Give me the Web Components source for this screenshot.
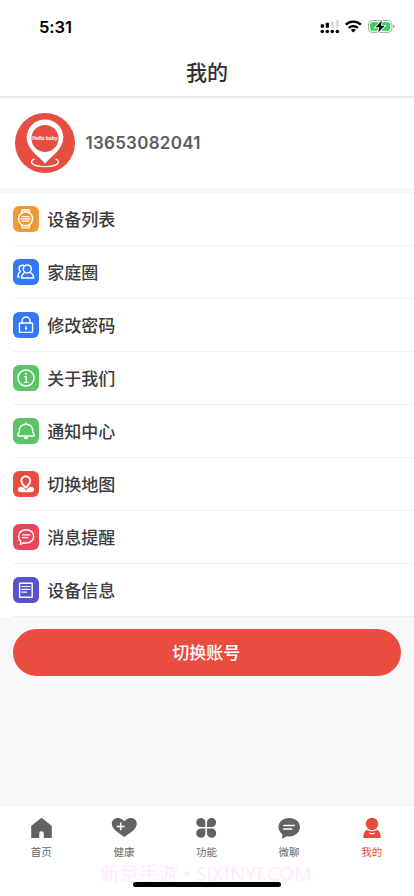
<!DOCTYPE html>
<html lang="zh-CN">
<head>
<meta charset="utf-8">
<title>我的</title>
<style>
html,body{margin:0;padding:0}
body{width:414px;height:896px;overflow:hidden;background:#f8f8fb;font-family:Inter,"Noto Sans CJK SC",sans-serif;color:#3a3a3a}
</style>
</head>
<body>
<mine-app></mine-app>
<script>
const define=(name,html)=>customElements.define(name,class extends HTMLElement{
  constructor(){
    super();
    this.attachShadow({mode:'open'});
  }
  connectedCallback(){
    if(this.shadowRoot.childNodes.length)return;
    const t=document.createElement('template');
    t.innerHTML=typeof html==='function'?html(this):html;
    this.shadowRoot.append(t.content.cloneNode(true));
  }
});

const icons={
  watch:`<path d="M8.600 7 9.200 3.700h6.800l.6 3.300M8.600 18.600l.6 3.300h6.800l.6-3.300" stroke-width="1.400"/><circle cx="12.600" cy="12.800" r="7" stroke-width="1.400"/><path d="M9.200 10.600h6.800M8 12.900h9.200M9.200 15.100h6.800" stroke-width="1.200"/>`,
  family:`<path d="M10.3 6.300C7.600 6 5.900 7.700 6.100 10c.1 1 .6 1.800 1.300 2.400-1.600.8-2.300 2.500-2.500 5.600h1.300" stroke-width="1.500"/><circle cx="14.300" cy="9.900" r="4" stroke-width="1.500"/><path d="M12.200 13.400c-2.200.9-3.600 2.800-3.700 5.600h12.100c-.1-2.800-1.500-4.700-3.900-5.600" stroke-width="1.500"/>`,
  lock:`<path d="M9 11V9a4 4 0 0 1 8 0v2" stroke-width="1.500"/><rect x="6.400" y="11" width="13.200" height="9.400" rx="1" stroke-width="1.400"/><path d="M13 14v3.600" stroke-width="1.100"/><circle cx="13" cy="16.300" r=".7" fill="#fff" stroke-width=".5"/>`,
  info:`<circle cx="13" cy="13" r="8" stroke-width="1.400"/><path d="M11.800 11.600h1.400v5.700M11.500 17.400h3.300" stroke-width="1.400"/><circle cx="13" cy="8.800" r="1" fill="#fff" stroke="none"/>`,
  bell:`<path d="M13 4.900v1.200M5 18v-2c1-.7 1.300-1.500 1.300-3.300 0-3.700 2.800-6.400 6.700-6.400s6.700 2.700 6.700 6.400c0 1.800.3 2.600 1.300 3.300v2z" stroke-width="1.400"/><path d="M10.600 19h4.800c-.3 1.500-1.200 2.300-2.400 2.300s-2.100-.8-2.400-2.300z" fill="#fff" stroke="none"/>`,
  map:`<path fill-rule="evenodd" d="M12.800 4.600c-3 0-5.300 2.300-5.300 5.200 0 3.200 3 5.700 5.300 8.400 2.300-2.700 5.300-5.200 5.300-8.400 0-2.900-2.300-5.200-5.300-5.200zm0 1.700c2 0 3.500 1.500 3.500 3.500 0 1.700-1.400 3.500-3.500 5.600-2.100-2.100-3.500-3.900-3.500-5.600 0-2 1.500-3.500 3.500-3.500z" fill="#fff" stroke="none"/><path d="M7.600 15.800c-4 1.100-3.500 5.300.6 5.500h9.600c4.100-.2 4.600-4.400.6-5.500-1.900-.5-3.300 1.200-5.400 3.700-2.100-2.500-3.500-4.200-5.400-3.700z" fill="#fff" stroke="none"/>`,
  message:`<path d="M13.200 5.800c4.300 0 7.500 2.800 7.500 6.600s-3.200 6.700-7.500 6.700c-1 0-1.800-.1-2.600-.4-.8.7-1.800 1.300-3.200 1.600.4-1 .5-2 .3-3-1.300-1.200-2.100-2.900-2.100-4.900 0-3.800 3.300-6.600 7.600-6.600z" stroke-width="1.500"/><path d="M9.600 10.900h7.400M9.600 13.600h5.400" stroke-width="1.200"/>`,
  device:`<rect x="6.600" y="6.300" width="12.600" height="14" stroke-width="1.400"/><path d="M8.800 9.500h8.300M8.800 12.300h8.300M8.800 15.200h4.800" stroke-width="1.200"/>`
};

define('status-bar',`<style>
:host{display:flex;height:53px;box-sizing:border-box;justify-content:space-between;align-items:center;padding:0 19px 0 39px}
b{font:600 16.500px Inter,sans-serif;letter-spacing:-.05px;color:#000}
svg{display:block}
</style>
<b>5:31</b>
<svg width="76" height="16" viewBox="319 19 76 16">
<g fill="#000"><circle cx="322.300" cy="31.500" r="1.800"/><circle cx="327.300" cy="31.500" r="1.800"/><circle cx="332.300" cy="31.500" r="1.800"/><circle cx="337.300" cy="31.500" r="1.800"/>
<rect x="320.700" y="24.300" width="3.300" height="3.500" rx=".8"/><rect x="325.700" y="22.800" width="3.300" height="5" rx=".8"/></g>
<rect x="330.700" y="21.500" width="3.300" height="6.300" rx=".8" fill="#ddd"/><rect x="335.700" y="20" width="3.300" height="7.800" rx=".8" fill="#ddd"/>
<g fill="none" stroke="#000" stroke-width="2.300"><path d="M345.700 24.700a11 11 0 0 1 15.200 0"/><path d="M348.700 27.900a6.700 6.700 0 0 1 9.200 0"/></g>
<path d="M350.800 29.900a3.800 3.800 0 0 1 5 0L353.300 32.500z"/>
<rect x="368.500" y="20.600" width="23.400" height="11.800" rx="3.600" fill="#fff" stroke="#aaa"/>
<rect x="370.200" y="22.200" width="20" height="8.600" rx="2.200" fill="#34ce59"/>
<path d="M393 24.800q1.500.4 1.500 1.700t-1.500 1.700z" fill="#999"/>
<path d="M381.900 20.500l-6.300 6.800h3.800l-1.200 5.300 6.500-6.800h-3.900z" stroke="#fff" stroke-width="1.800" paint-order="stroke"/>
</svg>`);

define('page-title',`<style>
:host{display:flex;height:45px;box-sizing:border-box;align-items:center;justify-content:center;padding-bottom:7px;border-bottom:2px solid #ebebeb;font:500 21px "Noto Sans CJK SC",sans-serif;color:#303030}
</style><slot></slot>`);

define('user-profile',`<style>
:host{display:flex;height:95px;box-sizing:border-box;align-items:center;padding:0 0 1px 14px;gap:9.500px;border-bottom:5px solid #f8f8fa;font:600 17px Inter,sans-serif;color:#5c5c5c}
svg{display:block}
span{letter-spacing:.26px}
</style>
<svg width="62" height="62" viewBox="0 0 62 62">
<circle cx="31" cy="31" r="30" fill="#e74d41"/>
<path d="M31 7.500c-10.300 0-18.300 7.800-18.300 18 0 11.500 11 17.800 18.300 26 7.300-8.200 18.300-14.500 18.300-26 0-10.200-8-18-18.300-18z" fill="#fff"/>
<circle cx="31" cy="26.400" r="13.500" fill="#e74d41"/>
<path d="M20.500 46.800c-5.500 2.400-4 7.500 10.500 7.900 14.500-.4 16-5.500 10.500-7.900" fill="none" stroke="#fff" stroke-width="1.300"/>
<text x="31" y="28.300" text-anchor="middle" font-family="Inter" font-weight="700" font-size="4.900" fill="#fff">Hello baby</text>
</svg>
<span><slot></slot></span>`);

define('menu-row',el=>`<style>
:host{display:flex;height:53px;box-sizing:border-box;align-items:center;gap:8.300px;margin-left:13px;border-bottom:1px solid #f1f1f3;font:500 17px "Noto Sans CJK SC",sans-serif;color:#3c3c3c}
svg{display:block;background:${el.getAttribute('color')};border-radius:6px}
span{padding-bottom:2px}
</style>
<svg width="26" height="26" viewBox="0 0 26 26" fill="none" stroke="#fff" stroke-linejoin="round" stroke-linecap="round">${icons[el.getAttribute('icon')]}</svg>
<span><slot></slot></span>`);

define('action-button',`<style>
:host{display:block;padding:12px 13px}
button{display:block;width:100%;height:47px;border:0;border-radius:24px;background:#e84d3f;color:#fff;font:500 17px "Noto Sans CJK SC",sans-serif;padding:0 1.500px 2px 0}
</style><button><slot></slot></button>`);

const tabs={
  home:`<path d="M14.500 1.800 4.700 9.400Q4.200 9.900 4.200 10.600v10.700q0 .6.600.6h7.400V17.400q0-2.200 2.300-2.200t2.300 2.200v4.500h7.400q.6 0 .6-.6V10.600q0-.7-.5-1.200z"/>`,
  heart:`<path d="M14.300 21C7.300 16.200 1.800 12.700 1.800 7.800c0-3.500 2.500-5.900 5.900-5.900 2.900 0 5.100 1.300 6.600 3.300 1.500-2 3.700-3.300 6.600-3.300 3.400 0 5.900 2.400 5.900 5.900 0 4.900-5.500 8.400-12.500 13.200z"/><path d="M10.700 6.500v7.800M6.800 10.400h7.800" stroke="#fff" stroke-width="1.500" fill="none"/>`,
  clover:`<path d="M8.800 2a4.600 4.600 0 0 1 4.600 4.600V11H8.800a4.500 4.500 0 0 1 0-9zM19.600 2A4.600 4.600 0 0 0 15 6.600V11h4.600a4.500 4.500 0 0 0 0-9zM8.800 21.800a4.600 4.600 0 0 0 4.600-4.600v-4.600H8.800a4.600 4.600 0 0 0 0 9.200zM19.600 21.800a4.600 4.600 0 0 1-4.600-4.600v-4.600h4.600a4.600 4.600 0 0 1 0 9.200z"/>`,
  chat:`<path d="M14.200 1.900C8.100 1.900 3.500 5.700 3.500 11c0 3 1.500 5.300 3.800 7.300V22.800l4.500-2.600c.8.200 1.600.2 2.400.2 6.100 0 10.700-4 10.700-9.400S20.300 1.900 14.200 1.900z"/><path d="M8.800 9.500h10.500M8.800 12.900h8" stroke="#fff" stroke-width="1.500" fill="none" stroke-linecap="round"/>`,
  user:`<circle cx="14" cy="8" r="6.200"/><path d="M8.800 13.700q5.200 3.200 10.400 0c2.400 1.400 3.600 4.200 3.600 8.200H5.200c0-4 1.200-6.800 3.600-8.200z"/><path d="M11.200 17q2.800 1.500 5.600 0" fill="none" stroke="#fff" stroke-width="1.300"/>`
};

define('tab-item',el=>`<style>
:host{display:flex;flex:1;flex-direction:column;align-items:center;font:400 10.500px/15px "Noto Sans CJK SC",sans-serif;color:#686868;padding-top:9px;gap:3.500px}
:host([active]){color:#e84b3e}
svg{display:block}
</style><svg width="28" height="24" viewBox="0 0 28 24" fill="${el.hasAttribute('active')?'#e84b3e':'#626262'}">${tabs[el.getAttribute('icon')]}</svg><span><slot></slot></span>`);

define('tab-bar',`<style>
:host{display:flex;position:relative;height:89px;background:#fff;box-sizing:border-box;padding-right:1px}
.mark{position:absolute;left:100px;top:55px;display:flex;font:400 19.600px/24px "Noto Sans","Noto Sans CJK SC",sans-serif;color:#fdebfc;white-space:pre}
i{position:absolute;left:133px;top:74.500px;width:148px;height:5.500px;border-radius:3px;background:#000}
</style><slot></slot><span class="mark">新意手游 • SJXINYI.COM</span><i></i>`);

define('mine-app',`<style>
:host{display:flex;flex-direction:column;height:896px;width:414px}
.top{background:#fff}
.fill{flex:1}
</style>
<div class="top">
<status-bar></status-bar>
<page-title>我的</page-title>
<user-profile>13653082041</user-profile>
<menu-row icon="watch" color="#f09a37">设备列表</menu-row>
<menu-row icon="family" color="#3478f6">家庭圈</menu-row>
<menu-row icon="lock" color="#3478f6">修改密码</menu-row>
<menu-row icon="info" color="#5bc466">关于我们</menu-row>
<menu-row icon="bell" color="#5bc466">通知中心</menu-row>
<menu-row icon="map" color="#e94d3f">切换地图</menu-row>
<menu-row icon="message" color="#e74758">消息提醒</menu-row>
<menu-row icon="device" color="#5552cb">设备信息</menu-row>
</div>
<action-button>切换账号</action-button>
<div class="fill"></div>
<tab-bar>
<tab-item icon="home">首页</tab-item>
<tab-item icon="heart">健康</tab-item>
<tab-item icon="clover">功能</tab-item>
<tab-item icon="chat">微聊</tab-item>
<tab-item icon="user" active>我的</tab-item>
</tab-bar>`);
</script>
</body>
</html>
